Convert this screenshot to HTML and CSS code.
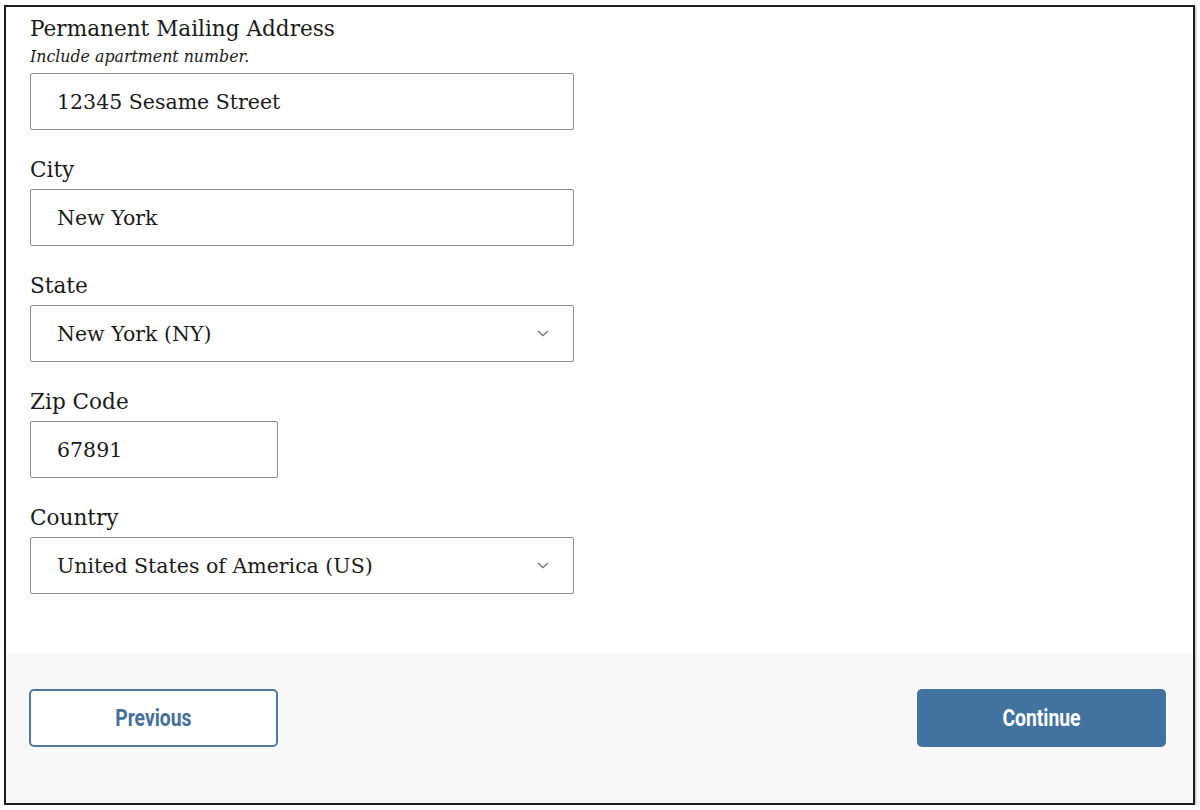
FILE: index.html
```html
<!DOCTYPE html>
<html lang="en">
<head>
<meta charset="utf-8">
<title>Address</title>
<link rel="stylesheet" href="styles.css">
</head>
<body>
<div class="frame">
  <form class="form">
    <div class="field first">
      <label class="label">Permanent Mailing Address</label>
      <div class="hint">Include apartment number.</div>
      <div class="input wide">12345 Sesame Street</div>
    </div>
    <div class="field">
      <label class="label">City</label>
      <div class="input wide">New York</div>
    </div>
    <div class="field">
      <label class="label">State</label>
      <div class="input wide select">
        <span>New York (NY)</span>
        <svg class="chev" width="12" height="7" viewBox="0 0 12 7"><path d="M1 1 L6 5.5 L11 1" fill="none" stroke="#7a7a7a" stroke-width="1.4"/></svg>
      </div>
    </div>
    <div class="field">
      <label class="label">Zip Code</label>
      <div class="input short">67891</div>
    </div>
    <div class="field">
      <label class="label">Country</label>
      <div class="input wide select">
        <span>United States of America (US)</span>
        <svg class="chev" width="12" height="7" viewBox="0 0 12 7"><path d="M1 1 L6 5.5 L11 1" fill="none" stroke="#7a7a7a" stroke-width="1.4"/></svg>
      </div>
    </div>
  </form>
  <div class="footer">
    <button class="btn btn-outline" type="button"><span class="btxt">Previous</span></button>
    <button class="btn btn-primary" type="button"><span class="btxt">Continue</span></button>
  </div>
</div>
</body>
</html>
```
FILE: styles.css
```css
html, body {
  margin: 0;
  padding: 0;
  background: #ffffff;
}
body {
  font-family: "DejaVu Serif", "Liberation Serif", serif;
  color: #1b1b1b;
}
.frame {
  box-sizing: border-box;
  width: 1191px;
  height: 800px;
  margin: 5px 0 0 4px;
  border: 2px solid #1c1c1c;
  box-shadow: 1px 1px 2px #b8b8b8;
  display: flex;
  flex-direction: column;
  background: #ffffff;
}
.form {
  flex: 1;
  padding: 8px 0 0 24px;
}
.field {
  margin-top: 26px;
}
.field.first {
  margin-top: 0;
}
.label {
  display: block;
  font-size: 21.6px;
  line-height: 28px;
  color: #1b1b1b;
}
.hint {
  font-style: italic;
  font-size: 15.8px;
  line-height: 22px;
  margin-top: 3px;
  color: #1b1b1b;
}
.input {
  box-sizing: border-box;
  margin-top: 5px;
  height: 57px;
  border: 1px solid #8d8d8d;
  border-radius: 2px;
  padding: 0 0 0 26px;
  display: flex;
  align-items: center;
  font-size: 20.5px;
  color: #1b1b1b;
}
.wide {
  width: 544px;
}
.short {
  width: 248px;
}
.select {
  justify-content: space-between;
  padding-right: 24px;
}
.chev {
  display: block;
}
.footer {
  height: 149px;
  box-sizing: border-box;
  background: #f8f8f8;
  display: flex;
  justify-content: space-between;
  align-items: flex-start;
  padding: 35px 27px 0 23px;
}
.btn {
  box-sizing: border-box;
  width: 249px;
  height: 58px;
  border-radius: 5px;
  font-family: "Roboto", "Liberation Sans", sans-serif;
  font-weight: 700;
  font-size: 23px;
  display: flex;
  align-items: center;
  justify-content: center;
  cursor: pointer;
  padding: 0;
}
.btxt {
  display: inline-block;
  transform: scaleX(0.84);
}
.btn-outline {
  background: #ffffff;
  border: 2px solid #4d7aa2;
  color: #46709a;
}
.btn-primary {
  background: #41739e;
  border: none;
  color: #ffffff;
}
```
